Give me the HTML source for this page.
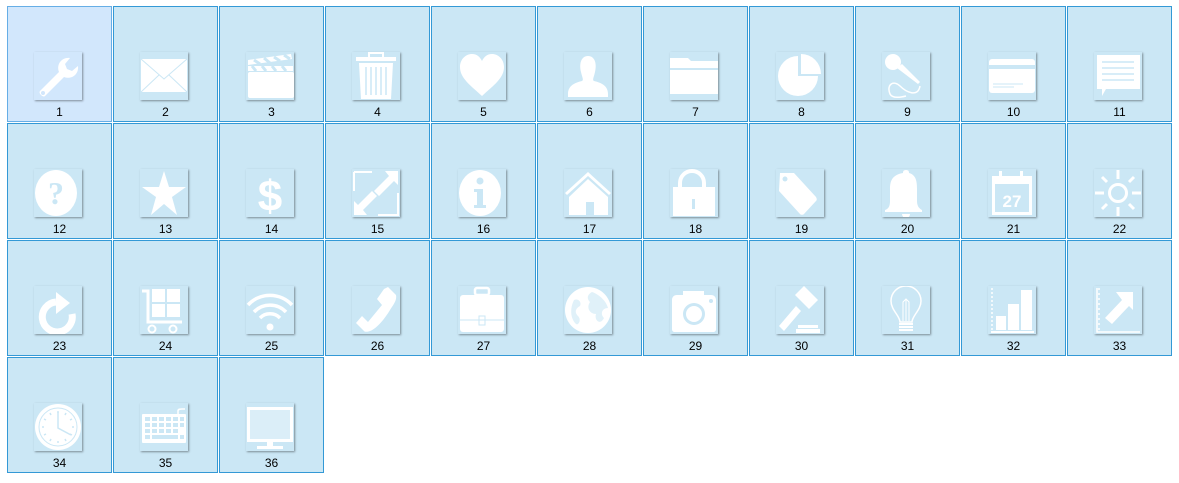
<!DOCTYPE html>
<html><head><meta charset="utf-8"><style>
body{margin:0;width:1179px;height:483px;background:#fff;position:relative;overflow:hidden;font-family:"Liberation Sans",sans-serif}
.t{position:absolute;width:103px;height:114px;border:1px solid #3399d6;background:#cbe7f5}
.t.a{background:#d2e7fc;border-color:#66aee6}
.i{position:absolute;left:26px;top:45px;width:48px;height:48px;box-shadow:1px 1px 2px rgba(0,0,0,.4);background:#cbe7f5}
.a .i{background:#d2e7fc}
.i svg{display:block}
.l{position:absolute;left:0;width:103px;top:98px;text-align:center;font-size:12px;color:#000}
</style></head><body>
<div id="g"></div>
<script>
var W='#fff',B='#cbe7f5';
var ic=[
'<path d="M6 39 L25 20 C22 12 28 5 36 6 L31 12 L33 17 L38 19 L44 14 C45 22 38 28 30 25 L11 44 C9 46 4 41 6 39Z" fill="#fff"/><circle cx="9" cy="41" r="2" fill="#d2e7fc"/>',
'<rect x="1" y="7" width="46" height="33" fill="#fff"/><path d="M1 7 L24 27 L47 7 M1 40 L19 23 M47 40 L29 23" stroke="#cbe7f5" stroke-width="1" fill="none"/>',
'<rect x="2" y="20" width="46" height="26" rx="2" fill="#fff"/><path d="M2 8 L45 2 L46 7 L2 13Z M2 14 L47 14 L47 19 L2 19Z" fill="#fff"/><path d="M8 8 L14 12 M18 6 L24 11 M28 5 L34 9 M38 3 L44 7 M6 14 L10 19 M16 14 L20 19 M26 14 L30 19 M36 14 L40 19" stroke="#cbe7f5" stroke-width="3"/>',
'<rect x="4" y="5" width="40" height="4" fill="#fff"/><rect x="17" y="1" width="14" height="5" fill="none" stroke="#fff" stroke-width="2"/><path d="M7 11 H41 L39 47 H9Z" fill="#fff"/><path d="M14 15V43M19 15V43M24 15V43M29 15V43M34 15V43" stroke="#cbe7f5" stroke-width="1.5"/>',
'<path d="M24 44 C12 33 2 26 2 15 C2 7 8 2 14 2 C19 2 22 5 24 9 C26 5 29 2 34 2 C40 2 46 7 46 15 C46 26 36 33 24 44Z" fill="#fff"/>',
'<path d="M24 4 C31 4 33 12 31 20 C30 25 28 28 30 29 C38 31 44 34 44 42 V45 H4 V42 C4 34 10 31 18 29 C20 28 18 25 17 20 C15 12 17 4 24 4Z" fill="#fff"/>',
'<path d="M0 6 H18 L21 9 H48 V16 H0Z M0 18 H48 V42 H0Z" fill="#fff"/>',
'<path d="M22 4 A20 20 0 1 0 42 24 H22Z" fill="#fff"/><path d="M25 2 A20 20 0 0 1 45 22 H25Z" fill="#fff"/>',
'<circle cx="11" cy="10" r="8" fill="#fff"/><path d="M15 16 L36 32 L38 30 L20 12Z" fill="#fff"/><path d="M38 34 C36 46 24 40 18 34 C12 28 4 32 8 42 C10 46 16 46 24 44" stroke="#fff" stroke-width="1.5" fill="none"/>',
'<rect x="1" y="7" width="46" height="34" rx="3" fill="#fff"/><rect x="1" y="13" width="46" height="4" fill="#cbe7f5"/><path d="M5 32 H35 M5 35 H26" stroke="#cbe7f5" stroke-width="1"/>',
'<path d="M3 3 H46 V37 H12 L8 44 V37 H3Z" fill="#fff"/><path d="M8 10 H40 M8 16 H40 M8 22 H40 M8 28 H40" stroke="#cbe7f5" stroke-width="1.5"/>',
'<ellipse cx="22" cy="24" rx="21" ry="23" fill="#fff"/><text x="22" y="35" text-anchor="middle" font-family="Liberation Serif" font-weight="bold" font-size="32" fill="#cbe7f5">?</text>',
'<path d="M24 2 L29 18 H46 L32 28 L37 46 L24 35 L11 46 L16 28 L2 18 H19Z" fill="#fff"/>',
'<text x="24" y="42" text-anchor="middle" font-family="Liberation Sans" font-weight="bold" font-size="44" fill="#fff">$</text>',
'<path d="M2 3 H20 M2 3 V22 M46 24 V46 H26" stroke="#fff" stroke-width="2" fill="none"/><path d="M46 2 V16 L42 12 L27 27 L22 22 L37 7 L33 2Z M2 46 V32 L6 36 L20 22 L25 27 L11 41 L15 46Z" fill="#fff"/>',
'<ellipse cx="22" cy="24" rx="21" ry="23" fill="#fff"/><circle cx="22" cy="12" r="3.5" fill="#cbe7f5"/><path d="M16 20 H25 V36 H28 V39 H16 V36 H19 V23 H16Z" fill="#cbe7f5"/>',
'<path d="M24 3 L47 24 L45 26 L24 7 L3 26 L1 24Z" fill="#fff"/><path d="M24 10 L44 28 V46 H30 V33 H22 V46 H5 V28Z" fill="#fff"/>',
'<path d="M10 18 V14 A12 12 0 0 1 34 14 V18" stroke="#fff" stroke-width="4" fill="none"/><rect x="3" y="18" width="42" height="29" fill="#fff"/><rect x="22" y="30" width="3" height="10" fill="#cbe7f5"/>',
'<path d="M4 4 H18 L40 28 C41 30 41 31 40 32 L28 45 C27 46 25 46 24 45 L3 22Z" fill="#fff"/><circle cx="9" cy="10" r="2.5" fill="#cbe7f5"/>',
'<path d="M24 1 C27 1 27 3 27 4 C34 6 35 12 35 20 V32 C35 38 38 40 40 41 V43 H3 V41 C6 40 8 38 8 32 V20 C8 12 10 6 21 4 C21 3 21 1 24 1Z" fill="#fff"/><path d="M20 45 A4 4 0 0 0 28 45Z" fill="#fff"/>',
'<path d="M4 7 H44 V46 H4Z M7 15 V43 H41 V15Z" fill="#fff" fill-rule="evenodd"/><rect x="11" y="2" width="3" height="10" fill="#fff"/><rect x="32" y="2" width="3" height="10" fill="#fff"/><text x="24" y="38" text-anchor="middle" font-family="Liberation Sans" font-weight="bold" font-size="17" fill="#fff">27</text>',
'<circle cx="24" cy="24" r="8.5" stroke="#fff" stroke-width="3" fill="none"/><path d="M24 1V10M24 38V47M1 24H10M38 24H47M8 8L13 13M35 35L40 40M40 8L35 13M13 35L8 40" stroke="#fff" stroke-width="3"/>',
'<path d="M22 16 A15 15 0 1 0 38 28" stroke="#fff" stroke-width="7" fill="none"/><path d="M22 6 L36 17 L22 28Z" fill="#fff"/>',
'<path d="M2 5 H8 V36 H42" stroke="#fff" stroke-width="3" fill="none"/><rect x="12" y="3" width="28" height="28" fill="#fff"/><path d="M26 3V31M12 17H40" stroke="#cbe7f5" stroke-width="2"/><circle cx="12" cy="43" r="3.5" stroke="#fff" stroke-width="2" fill="none"/><circle cx="33" cy="43" r="3.5" stroke="#fff" stroke-width="2" fill="none"/>',
'<path d="M2 19 A30 30 0 0 1 46 19 M8 26 A22 22 0 0 1 40 26 M14 32 A14 14 0 0 1 34 32" stroke="#fff" stroke-width="3.5" fill="none"/><circle cx="24" cy="41" r="3.5" fill="#fff"/>',
'<path d="M32 3 L36 1 L44 9 C45 14 42 18 38 24 C32 34 24 43 18 45 C15 46 13 46 12 45 L4 37 L10 30 L16 36 L30 19 L25 13Z" fill="#fff"/>',
'<rect x="17" y="2" width="14" height="7" rx="2" fill="none" stroke="#fff" stroke-width="2.5"/><rect x="2" y="9" width="44" height="37" rx="3" fill="#fff"/><path d="M2 34 H46" stroke="#cbe7f5"/><rect x="21" y="30" width="6" height="9" fill="none" stroke="#cbe7f5"/>',
'<circle cx="24" cy="24" r="23" fill="#fff"/><path d="M10 14 C14 12 18 16 16 20 C12 22 10 26 14 30 C18 34 14 40 12 38 C6 32 6 22 10 14Z M28 6 C34 8 42 14 44 22 C38 22 36 28 40 32 C36 40 30 34 32 28 C26 28 22 22 26 16 C22 12 24 8 28 6Z" fill="#cbe7f5" opacity=".6"/>',
'<path d="M13 9 V5 H34 V9 H41 C44 9 46 11 46 14 V43 C46 45 45 46 43 46 H5 C3 46 2 45 2 43 V14 C2 11 4 9 7 9Z" fill="#fff"/><circle cx="24" cy="28" r="11" fill="#cbe7f5"/><circle cx="24" cy="28" r="8" fill="#fff"/><circle cx="41" cy="15" r="2" fill="#cbe7f5"/>',
'<path d="M19 9 L28 0 L42 14 L33 23Z" fill="#fff"/><path d="M20 20 L25 25 L8 45 L3 40Z" fill="#fff"/><rect x="22" y="39" width="20" height="3" fill="#fff"/><rect x="20" y="43" width="24" height="4" fill="#fff"/>',
'<path d="M18 36 C18 30 9 24 9 15 A15 15 0 0 1 39 15 C39 24 30 30 30 36Z" stroke="#fff" stroke-width="1.5" fill="none"/><path d="M21 35 V16 L24 13 L27 16 V35 M24 13 V35" stroke="#fff" stroke-width="1" fill="none"/><path d="M17 38H31M17 41H31M17 44H31" stroke="#fff" stroke-width="2"/>',
'<path d="M4 2 V46" stroke="#fff" stroke-width="1.5" stroke-dasharray="2 2"/><rect x="8" y="30" width="10" height="14" fill="#fff"/><rect x="20" y="18" width="11" height="26" fill="#fff"/><rect x="33" y="4" width="11" height="40" fill="#fff"/><rect x="3" y="45" width="43" height="2" fill="#fff"/>',
'<path d="M3 2 V46 H46" stroke="#fff" stroke-width="1.5" fill="none"/><path d="M5 2V46" stroke="#fff" stroke-width="1.5" stroke-dasharray="2 3"/><path d="M22 6 H39 V24 L35 20 L18 38 L11 32 L28 14Z" fill="#fff"/>',
'<circle cx="24" cy="24" r="23" fill="#fff"/><circle cx="24" cy="24" r="19" fill="none" stroke="#cbe7f5" stroke-width="1"/><path d="M24 8V10M24 38V40M8 24H10M38 24H40M16 10L17 12M32 10L31 12M10 16L12 17M10 32L12 31M38 16L36 17M38 32L36 31M16 38L17 36M32 38L31 36" stroke="#cbe7f5" stroke-width="1.5"/><path d="M24 9 V25 L37 32" stroke="#cbe7f5" stroke-width="1.5" fill="none"/>',
'<path d="M38 11 V8 C38 6 40 6 42 6 H45" stroke="#fff" stroke-width="1.5" fill="none"/><rect x="2" y="11" width="44" height="29" rx="1" fill="#fff"/><g fill="#cbe7f5"><rect x="5" y="14" width="5" height="4"/><rect x="12" y="14" width="5" height="4"/><rect x="19" y="14" width="5" height="4"/><rect x="26" y="14" width="5" height="4"/><rect x="33" y="14" width="5" height="4"/><rect x="40" y="14" width="4" height="4"/><rect x="5" y="20" width="5" height="4"/><rect x="12" y="20" width="5" height="4"/><rect x="19" y="20" width="5" height="4"/><rect x="26" y="20" width="5" height="4"/><rect x="33" y="20" width="5" height="4"/><rect x="40" y="20" width="4" height="4"/><rect x="5" y="26" width="5" height="4"/><rect x="12" y="26" width="5" height="4"/><rect x="19" y="26" width="5" height="4"/><rect x="26" y="26" width="5" height="4"/><rect x="33" y="26" width="5" height="4"/><rect x="5" y="32" width="5" height="4"/><rect x="12" y="32" width="26" height="4"/><rect x="40" y="32" width="4" height="4"/></g>',
'<rect x="1" y="4" width="46" height="35" fill="#fff"/><rect x="4" y="7" width="40" height="29" fill="#dbeef8"/><rect x="21" y="39" width="6" height="4" fill="#fff"/><rect x="11" y="43" width="26" height="3" fill="#fff"/>'
];
var h='';
for(var k=0;k<36;k++){var c=k%11,r=Math.floor(k/11);
h+='<div class="t'+(k==0?' a':'')+'" style="left:'+(7+106*c)+'px;top:'+(6+117*r)+'px"><div class="i"><svg width="48" height="48" viewBox="0 0 48 48">'+ic[k]+'</svg></div><div class="l">'+(k+1)+'</div></div>';}
document.getElementById('g').innerHTML=h;
</script>
</body></html>
